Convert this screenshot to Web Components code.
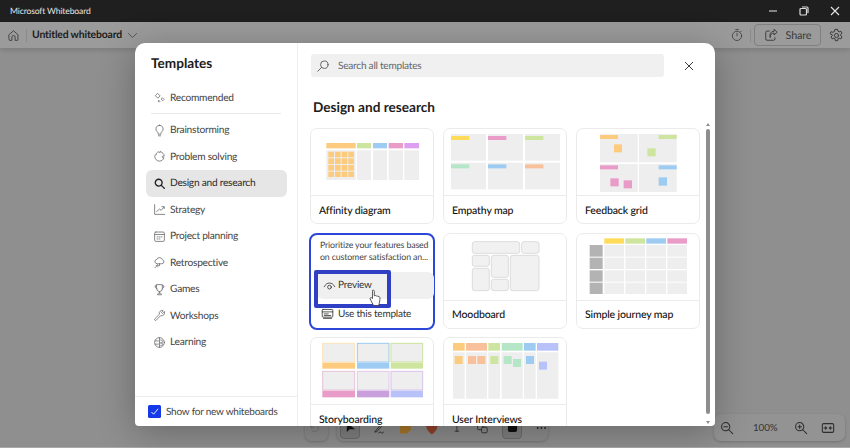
<!DOCTYPE html>
<html lang="en">
<head>
<meta charset="utf-8">
<title>Microsoft Whiteboard</title>
<style>
  html, body { margin: 0; height: 100%; overflow: hidden; }
  body { font-family: Lato, "Open Sans", "Liberation Sans", sans-serif; background: #8f8f8f; text-rendering: geometricPrecision; }
  #page { display: flex; flex-direction: column; height: 448px; position: relative; }
</style>
</head>
<body>
<div id="page">
  <wb-titlebar>Microsoft Whiteboard</wb-titlebar>
  <wb-toolbar>Untitled whiteboard</wb-toolbar>
  <wb-canvas></wb-canvas>
  <wb-dialog>
    <span slot="title">Templates</span>
    <wb-nav-item slot="nav" icon="sparkle">Recommended</wb-nav-item>
    <hr slot="nav">
    <wb-nav-item slot="nav" icon="bulb">Brainstorming</wb-nav-item>
    <wb-nav-item slot="nav" icon="puzzle">Problem solving</wb-nav-item>
    <wb-nav-item slot="nav" icon="search" selected>Design and research</wb-nav-item>
    <wb-nav-item slot="nav" icon="chart">Strategy</wb-nav-item>
    <wb-nav-item slot="nav" icon="calendar">Project planning</wb-nav-item>
    <wb-nav-item slot="nav" icon="cloud">Retrospective</wb-nav-item>
    <wb-nav-item slot="nav" icon="trophy">Games</wb-nav-item>
    <wb-nav-item slot="nav" icon="wrench">Workshops</wb-nav-item>
    <wb-nav-item slot="nav" icon="globe">Learning</wb-nav-item>
    <span slot="footer">Show for new whiteboards</span>
    <span slot="heading">Design and research</span>

    <wb-card label="Affinity diagram">
      <svg viewBox="18 12 366 198" width="122" height="66">
        <rect x="64" y="54" width="88" height="16" fill="#fdcb7e"/><rect x="156" y="54" width="42" height="16" fill="#cde59e"/><rect x="204" y="54" width="42" height="16" fill="#9dcbf1"/><rect x="251" y="54" width="43" height="16" fill="#ea9cc8"/><rect x="298" y="54" width="44" height="16" fill="#dda0f0"/>
        <g fill="#eee"><rect x="64" y="76" width="88" height="89"/><rect x="156" y="76" width="42" height="89"/><rect x="204" y="76" width="42" height="89"/><rect x="251" y="76" width="43" height="89"/><rect x="298" y="76" width="44" height="89"/></g>
        <g fill="#fdcb7e"><rect x="70" y="80" width="17" height="17"/><rect x="90" y="80" width="17" height="17"/><rect x="110" y="80" width="17" height="17"/><rect x="130" y="80" width="17" height="17"/><rect x="70" y="100" width="17" height="17"/><rect x="90" y="100" width="17" height="17"/><rect x="110" y="100" width="17" height="17"/><rect x="130" y="100" width="17" height="17"/><rect x="70" y="120" width="17" height="17"/><rect x="90" y="120" width="17" height="17"/><rect x="110" y="120" width="17" height="17"/><rect x="130" y="120" width="17" height="17"/><rect x="70" y="140" width="17" height="16"/><rect x="90" y="140" width="17" height="16"/><rect x="110" y="140" width="17" height="16"/><rect x="130" y="140" width="17" height="16"/></g>
      </svg>
    </wb-card>

    <wb-card label="Empathy map">
      <svg viewBox="12 12 366 198" width="122" height="66">
        <g fill="#eee"><rect x="33" y="27" width="105" height="80"/><rect x="144" y="27" width="105" height="80"/><rect x="255" y="27" width="105" height="80"/><rect x="33" y="113" width="105" height="80"/><rect x="144" y="113" width="105" height="80"/><rect x="255" y="113" width="105" height="80"/></g>
        <rect x="33" y="33" width="55" height="12" fill="#fedc5a"/><rect x="144" y="33" width="55" height="12" fill="#ea9cc8"/><rect x="255" y="33" width="55" height="12" fill="#cde59e"/><rect x="33" y="118" width="55" height="12" fill="#b4e6c7"/><rect x="144" y="118" width="55" height="12" fill="#9dcbf1"/><rect x="255" y="118" width="55" height="12" fill="#f9c09c"/>
      </svg>
    </wb-card>

    <wb-card label="Feedback grid">
      <svg viewBox="15 27 366 198" width="122" height="66">
        <g fill="#eee"><rect x="84" y="42" width="113" height="85"/><rect x="201" y="42" width="113" height="85"/><rect x="84" y="132" width="113" height="84"/><rect x="201" y="132" width="113" height="84"/></g>
        <rect x="84" y="45" width="54" height="12" fill="#fdcb7e"/><rect x="260" y="45" width="54" height="12" fill="#cde59e"/><rect x="84" y="136" width="54" height="12" fill="#ea9cc8"/><rect x="260" y="136" width="54" height="12" fill="#9dcbf1"/>
        <rect x="126" y="73" width="24" height="24" fill="#fdcb7e"/><rect x="226" y="85" width="25" height="24" fill="#cde59e"/><rect x="115" y="175" width="25" height="24" fill="#ea9cc8"/><rect x="155" y="181" width="25" height="24" fill="#ea9cc8"/><rect x="260" y="172" width="25" height="25" fill="#9dcbf1"/>
      </svg>
    </wb-card>

    <wb-hover-card>
      Prioritize your features based on customer satisfaction an...
    </wb-hover-card>

    <wb-card label="Moodboard">
      <svg viewBox="12 12 366 198" width="122" height="66">
        <g fill="#f1f1f1" stroke="#dcdcdc" stroke-width="3">
          <rect x="97" y="35" width="142" height="35" rx="7"/><rect x="245" y="35" width="52" height="35" rx="7"/><rect x="97" y="76" width="51" height="33" rx="7"/><rect x="97" y="115" width="51" height="67" rx="7"/><rect x="154" y="76" width="51" height="66" rx="7"/><rect x="154" y="148" width="51" height="34" rx="7"/><rect x="211" y="76" width="86" height="106" rx="7"/>
        </g>
      </svg>
    </wb-card>

    <wb-card label="Simple journey map">
      <svg viewBox="15 12 366 198" width="122" height="66">
        <rect x="97" y="25" width="59" height="16" fill="#fedc5a"/><rect x="160" y="25" width="59" height="16" fill="#cde59e"/><rect x="223" y="25" width="59" height="16" fill="#9dcbf1"/><rect x="286" y="25" width="59" height="16" fill="#ea9cc8"/>
        <g fill="#b3b3b3"><rect x="53" y="45" width="39" height="35"/><rect x="53" y="83" width="39" height="34"/><rect x="53" y="121" width="39" height="34"/><rect x="53" y="158" width="39" height="34"/></g>
        <g fill="#eee">
          <rect x="97" y="45" width="59" height="35"/><rect x="160" y="45" width="59" height="35"/><rect x="223" y="45" width="59" height="35"/><rect x="286" y="45" width="59" height="35"/>
          <rect x="97" y="83" width="59" height="34"/><rect x="160" y="83" width="59" height="34"/><rect x="223" y="83" width="59" height="34"/><rect x="286" y="83" width="59" height="34"/>
          <rect x="97" y="121" width="59" height="34"/><rect x="160" y="121" width="59" height="34"/><rect x="223" y="121" width="59" height="34"/><rect x="286" y="121" width="59" height="34"/>
          <rect x="97" y="158" width="59" height="34"/><rect x="160" y="158" width="59" height="34"/><rect x="223" y="158" width="59" height="34"/><rect x="286" y="158" width="59" height="34"/>
        </g>
      </svg>
    </wb-card>

    <wb-card label="Storyboarding">
      <svg viewBox="18 9 366 198" width="122" height="66">
        <g fill="#eee" stroke-width="3">
          <rect x="53" y="25" width="96" height="56" stroke="#fde3ba"/><rect x="157" y="25" width="95" height="56" stroke="#9dcbf1"/><rect x="258" y="25" width="95" height="56" stroke="#cde59e"/>
          <rect x="53" y="109" width="96" height="56" stroke="#e6c3d8"/><rect x="157" y="109" width="95" height="56" stroke="#e2c8ee"/><rect x="258" y="109" width="95" height="56" stroke="#d9c3ea"/>
        </g>
        <rect x="52" y="83" width="98" height="18" fill="#fdcb7e"/><rect x="156" y="83" width="97" height="18" fill="#9dcbf1"/><rect x="257" y="83" width="97" height="18" fill="#cde59e"/>
        <rect x="52" y="167" width="98" height="20" fill="#ea9cc8"/><rect x="156" y="167" width="97" height="20" fill="#c9a0dc"/><rect x="257" y="167" width="97" height="20" fill="#b9c2f8"/>
      </svg>
    </wb-card>

    <wb-card label="User Interviews">
      <svg viewBox="417 9 366 198" width="122" height="66">
        <rect x="444" y="24" width="35" height="23" fill="#fdcb7e"/><rect x="483" y="24" width="63" height="23" fill="#f9c09c"/><rect x="550" y="24" width="35" height="23" fill="#cde59e"/><rect x="590" y="24" width="63" height="23" fill="#b4e6c7"/><rect x="657" y="24" width="35" height="23" fill="#9dcbf1"/><rect x="696" y="24" width="64" height="23" fill="#b9c2f8"/>
        <g fill="#eee"><rect x="444" y="52" width="35" height="139"/><rect x="483" y="52" width="63" height="139"/><rect x="550" y="52" width="35" height="139"/><rect x="590" y="52" width="63" height="139"/><rect x="657" y="52" width="35" height="139"/><rect x="696" y="52" width="64" height="139"/></g>
        <rect x="449" y="63" width="24" height="24" fill="#fdcb7e"/><rect x="489" y="63" width="24" height="24" fill="#f9c09c"/><rect x="517" y="63" width="24" height="24" fill="#f9c09c"/><rect x="556" y="63" width="24" height="24" fill="#cde59e"/><rect x="596" y="63" width="24" height="24" fill="#b4e6c7"/><rect x="624" y="72" width="24" height="24" fill="#b4e6c7"/><rect x="663" y="63" width="24" height="24" fill="#9dcbf1"/><rect x="702" y="80" width="24" height="24" fill="#b9c2f8"/>
      </svg>
    </wb-card>
  </wb-dialog>
</div>

<script>
const ICONS = {
  sparkle: '<path d="M6 2 8.800 4.800 6 7.600 3.200 4.800zM12 7.500l1.700 1.700-1.700 1.700-1.700-1.700zM7.500 10.500l1 1-1 1-1-1z"/>',
  bulb: '<path d="M8 1.500a4.600 4.600 0 0 0-2.600 8.300c.6.500.8 1 .8 1.700v1h3.600v-1c0-.7.2-1.200.8-1.700A4.600 4.600 0 0 0 8 1.500zM6.600 14.500h2.800"/>',
  puzzle: '<path d="M9 2.200c2.800.5 4.800 2.800 4.800 5.300h-1.600c-1.200 0-1.200 2 0 2h1.300c-.8 2.500-3 4.200-5.500 4.200-3.200 0-5.800-2.600-5.800-5.700 0-.8.2-1.500.5-2.200 1 .8 2.300-.6 1.300-1.500C4.900 3 6.100 2.400 7.200 2.200c0 1.300 1.800 1.300 1.800 0z"/>',
  search: '<g stroke="#222" stroke-width="1.700"><circle cx="7" cy="7" r="4.200"/><path d="m10 10 4 4"/></g>',
  chart: '<path d="M2 2v12h12.500M4.500 10.500 8 7.500l2 1.500 3.500-4M11 4.500h2.800v2.500"/>',
  calendar: '<rect x="2" y="2.500" width="12" height="11.500" rx="1.500"/><path d="M2 5.500h12M5 8.500h1M7.500 8.500h1M10 8.500h1M5 11h1M7.500 11h1"/>',
  cloud: '<path d="M4.500 9.500a2.700 2.700 0 0 1 .2-5.300 3.600 3.600 0 0 1 6.800.4 2.500 2.500 0 0 1-.2 4.900zM8 9.500v2.500H4M5.500 10.500 4 12l1.500 1.500M2.500 14h.5"/>',
  trophy: '<path d="M4.500 2h7v5a3.500 3.500 0 0 1-7 0zM4.500 3.500H2.500c0 2 .7 3.200 2.300 3.700M11.500 3.500h2c0 2-.7 3.200-2.300 3.700M8 10.500v2M5.500 14c0-1 .8-1.500 2.500-1.500s2.500.5 2.500 1.500z"/>',
  wrench: '<path d="M14 3.500 11.800 5.700 10.300 4.200 12.500 2a3.500 3.500 0 0 0-4.600 4.500L2.300 12a1.200 1.200 0 0 0 1.700 1.700l5.500-5.600A3.500 3.500 0 0 0 14 3.500z"/>',
  globe: '<circle cx="8" cy="8" r="6"/><path d="M8 2v12M2.500 6h4M2.500 10h4M9.500 5c2 0 2.500 1 2.500 2s-1 1.500-2.500 1.500M9.500 8.500c2 0 2.500 1 2.500 2s-1 1-2.500 1"/>'
}

const icon = (body, size = 14, color = '#6a6a6a', sw = 1) =>
  `<svg width="${size}" height="${size}" viewBox="0 0 16 16" fill="none" stroke="${color}" stroke-width="${sw}" stroke-linecap="round" stroke-linejoin="round">${body}</svg>`

class WbTitlebar extends HTMLElement {
  constructor() {
    super()
    this.attachShadow({ mode: 'open' })
    this.shadowRoot.innerHTML = `
      <style>
        :host {
          display: flex;
          align-items: center;
          height: 22px;
          flex: none;
          background: #1f1f1f;
          color: #e4e4e4;
          font-size: 8.6px;
          letter-spacing: -.15px;
          padding-left: 10px;
          box-sizing: border-box;
        }
        .controls { margin-left: auto; display: flex; }
        .controls span { width: 31px; height: 22px; display: flex; align-items: center; justify-content: center; }
      </style>
      <slot></slot>
      <div class="controls">
        <span><svg width="10" height="10" viewBox="0 0 10 10" stroke="#c8c8c8" stroke-width="1.200" fill="none"><path d="M1 5h8"/></svg></span>
        <span><svg width="10" height="10" viewBox="0 0 10 10" stroke="#dcdcdc" stroke-width="1.200" fill="none"><rect x="1" y="2.500" width="6.500" height="6.500" rx="1"/><path d="M3 1h5a1 1 0 0 1 1 1v5"/></svg></span>
        <span><svg width="10" height="10" viewBox="0 0 10 10" stroke="#e6e6e6" stroke-width="1.100" fill="none"><path d="m1 1 8 8M9 1 1 9"/></svg></span>
      </div>
    `
  }
}

class WbToolbar extends HTMLElement {
  constructor() {
    super()
    this.attachShadow({ mode: 'open' })
    this.shadowRoot.innerHTML = `
      <style>
        :host {
          display: flex;
          align-items: center;
          height: 26px;
          flex: none;
          box-sizing: border-box;
          background: #9b9b9b;
          color: #1c1c1c;
          box-shadow: 0 2px 5px rgba(0,0,0,.14);
          position: relative;
          z-index: 1;
        }
        .home { margin-left: 7px; display: flex; }
        .sep { width: 1px; height: 13px; background: #8a8a8a; margin: 0 5px 0 6px; }
        .name { font-size: 10.4px; letter-spacing: -.16px; font-weight: 700; }
        .chev { margin-left: 4px; display: flex; }
        .right { margin-left: auto; display: flex; align-items: center; }
        .right .timer { display: flex; margin-right: 6px; }
        .share {
          width: 67px; height: 22px; box-sizing: border-box;
          border: 1px solid #808080; border-radius: 4px;
          display: flex; align-items: center; justify-content: center; gap: 8px;
          font-size: 10.8px; letter-spacing: -.15px; color: #3a3a3a; margin: 0 8px 0 3px;
        }
        .gear { display: flex; margin-right: 6px; }
      </style>
      <span class="home">${icon('<path d="M2.500 7 8 2.200 13.500 7v6.300a.7.7 0 0 1-.7.7H10V10a2 2 0 0 0-4 0v4H3.200a.7.7 0 0 1-.7-.7z"/>', 13, '#333')}</span>
      <span class="sep"></span>
      <span class="name"><slot></slot></span>
      <span class="chev">${icon('<path d="m3 5.500 5 5 5-5"/>', 13, '#444')}</span>
      <div class="right">
        <span class="timer">${icon('<circle cx="8" cy="9" r="5.300"/><path d="M6.500 1.800h3M8 6v3M12 4.500l.9-.9"/>', 14, '#444')}</span>
        <span class="sep" style="margin:0"></span>
        <span class="share">${icon('<path d="M6 3.500H3.500A1.500 1.500 0 0 0 2 5v7.500A1.500 1.500 0 0 0 3.500 14H11a1.500 1.500 0 0 0 1.500-1.500V11M7 10.500c0-3 1.800-4.700 4.500-4.700V8L15 4.800 11.500 1.500v2.300C8 3.800 6 6.500 7 10.500z"/>', 14, '#333')}Share</span>
        <span class="gear">${icon('<circle cx="8" cy="8" r="2.200"/><path d="M6.800 1.500h2.400l.4 1.900 1.300.7 1.800-.7 1.200 2.100-1.400 1.300v1.400l1.400 1.300-1.200 2.100-1.800-.7-1.300.7-.4 1.900H6.800l-.4-1.900-1.300-.7-1.800.7-1.200-2.100 1.400-1.300V7.300L1.100 6l1.200-2.100 1.800.7 1.300-.7z"/>', 15, '#333')}</span>
      </div>
    `
  }
}

class WbCanvas extends HTMLElement {
  constructor() {
    super()
    this.attachShadow({ mode: 'open' })
    this.shadowRoot.innerHTML = `
      <style>
        :host {
          flex: 1;
          display: flex;
          align-items: flex-end;
          background: #8f8f8f;
          padding: 0 5px 6px 305px;
          border-bottom: 1px solid #aaa;
          box-sizing: border-box;
        }
        .group {
          height: 27px; box-sizing: border-box;
          background: #8c8c8c;
          border-radius: 7px;
          box-shadow: 0 1px 3px rgba(0,0,0,.2);
          display: flex; align-items: center;
        }
        .undo { width: 23px; margin-right: 9px; padding-left: 3px; }
        .tools { width: 211px; gap: 13px; padding: 0 0 0 3px; }
        .tools .on { width: 20px; height: 20px; background: #7f7f7f; border: 1px solid #6c6c6c; border-radius: 4px; display: flex; align-items: center; justify-content: center; }
        .zoom { margin-left: auto; width: 131px; padding-left: 6px; box-sizing: border-box; font-size: 9.8px; letter-spacing: -.1px; color: #333; background: #939393; }
        .zoom svg { display: block; flex: none; }
        .zoom span { margin: 0 18px 0 19px; width: 23px; }
        .zoom svg:last-child { margin-left: 13px; }
      </style>
      <div class="group undo">${icon('<path d="M4 3v4h4M4 7a5 5 0 1 1 1 4"/>', 12, '#6e6e6e')}</div>
      <div class="group tools">
        <span class="on"><svg width="11" height="11" viewBox="0 0 12 12"><path d="M2 1v10l3-3h6z" fill="#111"/></svg></span>
        ${icon('<path d="M3 12 10 3.500c1-1 2.500.3 1.500 1.500L5 12.500 2.500 13zM7 14c1.500-1 3-1.500 3.500 0s2-.5 3-1"/>', 14, '#222')}
        <svg width="14" height="14" viewBox="0 0 14 14"><path d="M1 1h12v8l-4 4H1z" fill="#a8762a"/></svg>
        <svg width="15" height="14" viewBox="0 0 15 14"><path d="M1 2c3-2 10-2 13 0 0 5-2 9-6.500 12C3 11 1 7 1 2z" fill="#93412a"/></svg>
        ${icon('<path d="M5.500 2h5M8 2v11M5.500 13h5"/>', 13, '#222')}
        ${icon('<path d="M6 10H3a1 1 0 0 1-1-1V4a1 1 0 0 1 1-1h5a1 1 0 0 1 1 1v2"/><rect x="7" y="7" width="7" height="7" rx="1.500"/>', 14, '#222')}
        <span class="on"><svg width="11" height="11" viewBox="0 0 12 12"><rect x="1" y="1" width="10" height="10" rx="2" fill="#111"/></svg></span>
        <svg width="14" height="14" viewBox="0 0 14 14" fill="#222"><circle cx="3" cy="7" r="1"/><circle cx="7" cy="7" r="1"/><circle cx="11" cy="7" r="1"/></svg>
      </div>
      <div class="group zoom">
        ${icon('<circle cx="6.500" cy="6.500" r="4.700"/><path d="m10 10 4.500 4.500M4.500 6.500h4"/>', 14, '#2e2e2e', 1.200)}
        <span>100%</span>
        ${icon('<circle cx="6.500" cy="6.500" r="4.700"/><path d="m10 10 4.500 4.500M4.500 6.500h4M6.500 4.500v4"/>', 14, '#2e2e2e', 1.200)}
        ${icon('<rect x="1.500" y="3" width="13" height="10" rx="1.500"/><path d="M3.500 8h3M5 6.700 6.500 8 5 9.300M12.500 8h-3M11 6.700 9.500 8l1.500 1.300"/>', 14, '#2e2e2e', 1.200)}
      </div>
    `
  }
}

class WbNavItem extends HTMLElement {
  constructor() {
    super()
    this.attachShadow({ mode: 'open' })
    const name = this.getAttribute('icon')
    this.shadowRoot.innerHTML = `
      <style>
        :host {
          display: flex;
          align-items: center;
          height: 26.5px;
          padding-left: 7px;
          gap: 4px;
          border-radius: 6px;
          font-size: 10.2px;
          letter-spacing: -.26px;
          color: #444;
        }
        :host([selected]) { background: #e6e6e6; color: #2a2a2a; }
        svg { display: block; flex: none; }
      </style>
      ${icon(ICONS[name], 13, '#6e6e6e')}
      <slot></slot>
    `
  }
}

class WbDialog extends HTMLElement {
  constructor() {
    super()
    this.attachShadow({ mode: 'open' })
    this.shadowRoot.innerHTML = `
      <style>
        :host {
          position: absolute;
          left: 135px;
          top: 43px;
          width: 580px;
          height: 383px;
          background: #fff;
          border-radius: 10px 10px 4px 4px;
          box-shadow: 0 6px 36px rgba(0,0,0,.28);
          display: flex;
          overflow: hidden;
          z-index: 2;
        }
        .side {
          width: 163px;
          flex: none;
          box-sizing: border-box;
          border-right: 1px solid #eee;
          display: flex;
          flex-direction: column;
        }
        .title { font-size: 13.6px; font-weight: 700; color: #1c1c1c; padding: 10px 0 0 16px; line-height: 20px; }
        nav { display: flex; flex-direction: column; padding: 12px 10px 0 11px; }
        ::slotted(hr) { border: 0; height: 1px; background: #e9e9e9; margin: 1.5px 6px 3px 5px; flex: none; }
        .foot {
          margin-top: auto;
          height: 29px;
          border-top: 1px solid #ebebeb;
          display: flex; align-items: center; gap: 5px;
          padding-left: 13px;
          font-size: 10px; letter-spacing: -.22px; color: #444;
        }
        .check { width: 13px; height: 13px; background: #1539e6; border-radius: 1.5px; display: flex; align-items: center; justify-content: center; }
        .main { flex: 1; min-width: 0; display: flex; flex-direction: column; padding: 11px 0 0 12px; position: relative; }
        .top { display: flex; align-items: center; }
        .search {
          width: 353px; height: 23px; margin-left: 1px;
          background: #f0f0f0; border-radius: 3px;
          display: flex; align-items: center; gap: 8px;
          padding-left: 5px; box-sizing: border-box;
          font-size: 10.1px; letter-spacing: -.24px; color: #666;
        }
        .search span { padding-top: 1px; }
        .close { margin-left: 19px; display: flex; }
        h2 { margin: 20px 0 10px 3px; font-size: 13.6px; font-weight: 700; color: #1c1c1c; line-height: 20px; padding-bottom: 1px; }
        .grid {
          display: grid;
          grid-template-columns: repeat(3, 124px);
          grid-auto-rows: 96px;
          column-gap: 9px;
          row-gap: 8.7px;
        }
        .scroll { position: absolute; left: 406px; top: 79px; width: 8px; height: 304px; }
        .scroll .thumb { position: absolute; left: 2px; top: 7px; width: 4px; height: 285px; background: #8d8d8d; border-radius: 2px; }
        .scroll i { position: absolute; left: 1.5px; width: 0; height: 0; border: 2.5px solid transparent; }
        .scroll .up { top: -1px; border-bottom: 3px solid #8d8d8d; }
        .scroll .down { bottom: 0; border-top: 3px solid #8d8d8d; }
      </style>
      <section class="side">
        <div class="title"><slot name="title"></slot></div>
        <nav><slot name="nav"></slot></nav>
        <div class="foot">
          <span class="check"><svg width="9" height="9" viewBox="0 0 10 10" fill="none" stroke="#fff" stroke-width="1"><path d="m1.500 5.500 2.500 2.500 5-6"/></svg></span>
          <slot name="footer"></slot>
        </div>
      </section>
      <section class="main">
        <div class="top">
          <div class="search">${icon('<circle cx="9.500" cy="6.500" r="4.300"/><path d="M6.500 9.500 2 14"/>', 14, '#555')}<span>Search all templates</span></div>
          <span class="close">${icon('<path d="m3 3 10 10M13 3 3 13"/>', 12, '#222', 1.200)}</span>
        </div>
        <h2><slot name="heading"></slot></h2>
        <div class="grid"><slot></slot></div>
        <div class="scroll"><i class="up"></i><div class="thumb"></div><i class="down"></i></div>
      </section>
    `
  }
}

class WbCard extends HTMLElement {
  constructor() {
    super()
    this.attachShadow({ mode: 'open' })
    this.shadowRoot.innerHTML = `
      <style>
        :host {
          display: flex;
          flex-direction: column;
          box-sizing: border-box;
          width: 124px;
          height: 96px;
          border: 1px solid #ebebeb;
          border-radius: 7px;
          background: #fff;
        }
        .thumb { height: 66px; flex: none; }
        ::slotted(svg) { display: block; }
        .label {
          flex: 1;
          display: flex; align-items: center;
          border-top: 1px solid #ebebeb;
          padding: 2px 0 0 8px;
          font-size: 10.5px; letter-spacing: -.14px; font-weight: 500; color: #111;
        }
      </style>
      <div class="thumb"><slot></slot></div>
      <div class="label"></div>
    `
    this.shadowRoot.querySelector('.label').textContent = this.getAttribute('label')
  }
}

class WbHoverCard extends HTMLElement {
  constructor() {
    super()
    this.attachShadow({ mode: 'open' })
    this.shadowRoot.innerHTML = `
      <style>
        :host {
          display: flex;
          flex-direction: column;
          position: relative;
          box-sizing: border-box;
          width: 126px;
          height: 97px;
          margin-left: -1px;
          border: 2px solid #2b46d8;
          border-radius: 8px;
          background: #fff;
          font-size: 8.8px;
          letter-spacing: -.14px;
          color: #444;
        }
        .text { box-sizing: border-box; padding: 4.5px 2px 0 9px; line-height: 11.5px; height: 32px; overflow: hidden; }
        .preview {
          margin: 5px -1px 0 6px; height: 27px; background: #f0f0f0; border-radius: 6px;
          display: flex; align-items: center; gap: 2px; padding-left: 6px;
          font-size: 10px; letter-spacing: -.2px; color: #333;
        }
        .use {
          margin: 3px 0 0 10px; height: 24px;
          display: flex; align-items: center; gap: 4px;
          font-size: 10px; letter-spacing: -.2px; color: #333;
        }
        .mark { position: absolute; left: 3px; top: 35px; width: 77px; height: 38px; box-sizing: border-box; border: 4px solid #2f40c4; border-radius: 2px; }
        .cursor { position: absolute; left: 58px; top: 54px; }
        svg { display: block; flex: none; }
      </style>
      <div class="text"><slot></slot></div>
      <div class="preview">${icon('<path d="M1.500 9.500C3 6.500 5.300 5 8 5s5 1.500 6.500 4.500"/><circle cx="8" cy="10" r="2.300"/>', 13, '#333')}Preview</div>
      <div class="use">${icon('<rect x="1.500" y="3" width="13" height="9.500" rx="1"/><path d="M1.500 6h13M4 8.500h5M4 10.500h8" /><path d="M3 14h10"/>', 13, '#333')}Use this template</div>
      <div class="mark"></div>
      <svg class="cursor" width="13" height="17" viewBox="0 0 13 17"><path d="M3.500 1.300c.8-.6 1.800 0 1.800 1v4.500c.8-.4 1.700-.3 2 .3.700-.3 1.500-.2 1.800.4.700-.2 1.500 0 1.700.7.300 1.500.2 3.300-.3 5l-.8 3.300H4.500L1.200 10c-.5-.8.500-1.800 1.400-1.200l.9.800V2.300z" fill="#fff" stroke="#333" stroke-width=".8" stroke-linejoin="round"/></svg>
    `
  }
}

customElements.define('wb-titlebar', WbTitlebar)
customElements.define('wb-toolbar', WbToolbar)
customElements.define('wb-canvas', WbCanvas)
customElements.define('wb-nav-item', WbNavItem)
customElements.define('wb-dialog', WbDialog)
customElements.define('wb-card', WbCard)
customElements.define('wb-hover-card', WbHoverCard)
</script>
</body>
</html>
